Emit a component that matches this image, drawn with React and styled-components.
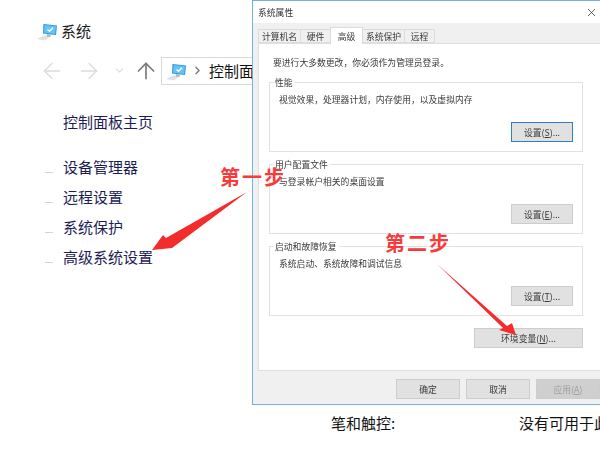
import styled, { createGlobalStyle } from 'styled-components'
import { ArrowLeft, ArrowRight, ArrowUp, ChevronDown, ChevronRight, X } from 'lucide-react'

const GlobalStyle = createGlobalStyle`
  html, body {
    margin: 0;
    padding: 0;
    width: 600px;
    height: 456px;
    overflow: hidden;
    background: #fff;
  }
  * { box-sizing: border-box; }
`

const Page = styled.div`
  position: relative;
  width: 600px;
  height: 456px;
  overflow: hidden;
  padding: 19px 0 0 38px;
  background: #fff;
  font-family: "Noto Sans CJK SC", "Liberation Sans", sans-serif;
  font-size: 15px;
  color: #1c1c1c;
`

const TitleRow = styled.div`
  display: flex;
  align-items: center;
  gap: 3px;
  height: 24px;
  line-height: 24px;
  margin-left: -2px;
`

const NavRow = styled.div`
  display: flex;
  align-items: center;
  height: 27px;
  margin-top: 14px;
  margin-left: 5px;
`

const NavButton = styled.div`
  display: flex;
  align-items: center;
  justify-content: center;
  flex: none;
  width: ${p => p.$w}px;
  margin-right: ${p => p.$gap || 0}px;
  color: ${p => p.$on ? '#7d7d7d' : '#dcdcdc'};
  svg { flex: none; }
`

const AddressBar = styled.div`
  display: flex;
  align-items: center;
  width: 200px;
  height: 28px;
  margin-left: 8px;
  padding-left: 3px;
  border: 1px solid #d9d9d9;
  white-space: nowrap;
  color: #111;
`

const Crumb = styled.span`
  display: flex;
  margin: 0 5px 0 4px;
  color: #777;
`

const Sidebar = styled.div`
  margin: 23px 0 0 25px;
  color: #1d1d55;
`

const HomeLink = styled.div`
  height: 30px;
  line-height: 30px;
  margin-bottom: 15px;
`

const SideLink = styled.div`
  position: relative;
  height: 30px;
  line-height: 30px;
  &::before {
    content: "";
    position: absolute;
    left: -18px;
    top: 20px;
    width: 8px;
    height: 1px;
    background: #d4d4d4;
  }
`

const SpecRow = styled.div`
  display: grid;
  grid-template-columns: 188px 200px;
  margin: 139px 0 0 293px;
  height: 24px;
  line-height: 24px;
  white-space: nowrap;
  color: #111;
`

/* the dialog floats over the page like a real window */
const Dialog = styled.div`
  position: absolute;
  left: 252px;
  top: 0;
  width: 360px;
  height: 405px;
  display: flex;
  flex-direction: column;
  background: #f0f0f0;
  border: 1px solid #70b1e6;
  font-size: 8.8px;
  color: #3a3a3a;
  filter: blur(0.3px);
`

const TitleBar = styled.div`
  display: flex;
  align-items: center;
  justify-content: space-between;
  flex: none;
  height: 22px;
  padding: 0 13px 0 5px;
  background: #fff;
  color: #333;
`

const TabRow = styled.div`
  display: flex;
  align-items: flex-end;
  flex: none;
  height: 20px;
  padding-left: 5px;
`

const Tab = styled.div`
  display: flex;
  align-items: center;
  justify-content: center;
  width: ${p => p.$w}px;
  height: ${p => p.$active ? 17 : 14}px;
  margin-bottom: ${p => p.$active ? -1 : 0}px;
  background: ${p => p.$active ? '#fff' : '#f0f0f0'};
  border: 1px solid #dcdcdc;
  border-bottom: ${p => p.$active ? 'none' : '1px solid #dcdcdc'};
  margin-right: -1px;
  position: relative;
  z-index: ${p => p.$active ? 1 : 0};
  white-space: nowrap;
`

const Panel = styled.div`
  flex: none;
  height: 328px;
  margin-left: 5px;
  padding: 13px 0 0 10px;
  background: #fff;
  border: 1px solid #dfdfdf;
`

const Notice = styled.div`
  height: 12px;
  line-height: 12px;
  margin-left: 4px;
  white-space: nowrap;
`

const Group = styled.div`
  position: relative;
  width: 314px;
  height: ${p => p.$h}px;
  margin-top: ${p => p.$top}px;
  padding: 11px 9px 9px 9px;
  border: 1px solid #e2e2e2;
  display: flex;
  flex-direction: column;
  justify-content: space-between;
`

const GroupLabel = styled.span`
  position: absolute;
  left: 4px;
  top: -6px;
  padding: 0 2px 0 1px;
  line-height: 12px;
  background: #fff;
`

const GroupText = styled.div`
  height: 12px;
  line-height: 12px;
  white-space: nowrap;
`

const SetButton = styled.div`
  display: flex;
  align-items: center;
  justify-content: center;
  align-self: flex-end;
  width: ${p => p.$w || 62}px;
  height: 20px;
  background: #e1e1e1;
  border: ${p => p.$focus ? '1px solid #2f7fc4' : '1px solid #cdcdcd'};
  color: ${p => p.$off ? '#a0a0a0' : '#3a3a3a'};
  ${p => p.$off ? 'background: #cfcfcf;' : ''}
  white-space: nowrap;
`

const EnvRow = styled.div`
  display: flex;
  justify-content: flex-end;
  width: 314px;
  margin-top: 12px;
`

const Footer = styled.div`
  display: flex;
  gap: 6px;
  margin: 8px 0 0 143px;
`

const Mnemonic = styled.span`
  text-decoration: underline;
`

const Annotations = styled.svg`
  position: absolute;
  left: 0;
  top: 0;
  pointer-events: none;
`

const Note = styled.div`
  position: absolute;
  left: ${p => p.$x}px;
  top: ${p => p.$y}px;
  font-size: 20px;
  line-height: 24px;
  font-weight: 700;
  letter-spacing: 2px;
  color: #f93a3a;
  white-space: nowrap;
`

function PcIcon() {
  return (
    <svg width="22" height="20" viewBox="0 0 22 20" style={{ flex: 'none' }}>
      <path d="M1 18 L8 14.5 L14 15.5 L9 19.5 Z" fill="#dfe2e5" />
      <path d="M7.5 3 L21 4.5 L20 14 L7 12.5 Z" fill="#2f93dd" />
      <path d="M8.5 4 L20 5.3 L19.2 13 L8 11.7 Z" fill="#62c4f6" />
      <path d="M11.5 8.5 L13.5 10.3 L17 6.8" fill="none" stroke="#fff" strokeWidth="1.3" />
      <path d="M11 13 L15 13.5 L14.5 16 L10.5 15.5 Z" fill="#aeb8c0" />
    </svg>
  )
}

export default function App() {
  return (
    <Page>
      <GlobalStyle />
      <TitleRow><PcIcon />系统</TitleRow>
      <NavRow>
        <NavButton $w={17} $gap={21}><ArrowLeft size={26} strokeWidth={1.3} /></NavButton>
        <NavButton $w={16} $gap={18}><ArrowRight size={26} strokeWidth={1.3} /></NavButton>
        <NavButton $w={9} $gap={14}><ChevronDown size={13} strokeWidth={2} /></NavButton>
        <NavButton $w={15} $on><ArrowUp size={26} strokeWidth={1.6} /></NavButton>
        <AddressBar>
          <PcIcon />
          <Crumb><ChevronRight size={13} strokeWidth={2.4} /></Crumb>
          控制面板
        </AddressBar>
      </NavRow>
      <Sidebar>
        <HomeLink>控制面板主页</HomeLink>
        <SideLink>设备管理器</SideLink>
        <SideLink>远程设置</SideLink>
        <SideLink>系统保护</SideLink>
        <SideLink>高级系统设置</SideLink>
      </Sidebar>
      <SpecRow>
        <span>笔和触控:</span>
        <span>没有可用于此显示器的笔或触控输入</span>
      </SpecRow>

      <Dialog>
        <TitleBar>
          系统属性
          <X size={13} strokeWidth={1.4} color="#333" />
        </TitleBar>
        <TabRow>
          <Tab $w={43}>计算机名</Tab>
          <Tab $w={31}>硬件</Tab>
          <Tab $w={33} $active>高级</Tab>
          <Tab $w={43}>系统保护</Tab>
          <Tab $w={31}>远程</Tab>
        </TabRow>
        <Panel>
          <Notice>要进行大多数更改，你必须作为管理员登录。</Notice>
          <Group $h={70} $top={13}>
            <GroupLabel>性能</GroupLabel>
            <GroupText>视觉效果，处理器计划，内存使用，以及虚拟内存</GroupText>
            <SetButton $focus>设置(<Mnemonic>S</Mnemonic>)...</SetButton>
          </Group>
          <Group $h={70} $top={12}>
            <GroupLabel>用户配置文件</GroupLabel>
            <GroupText>与登录帐户相关的桌面设置</GroupText>
            <SetButton>设置(<Mnemonic>E</Mnemonic>)...</SetButton>
          </Group>
          <Group $h={70} $top={12}>
            <GroupLabel>启动和故障恢复</GroupLabel>
            <GroupText>系统启动、系统故障和调试信息</GroupText>
            <SetButton>设置(<Mnemonic>T</Mnemonic>)...</SetButton>
          </Group>
          <EnvRow>
            <SetButton $w={109}>环境变量(<Mnemonic>N</Mnemonic>)...</SetButton>
          </EnvRow>
        </Panel>
        <Footer>
          <SetButton $w={64}>确定</SetButton>
          <SetButton $w={64}>取消</SetButton>
          <SetButton $w={64} $off>应用(<Mnemonic>A</Mnemonic>)</SetButton>
        </Footer>
      </Dialog>

      <Annotations width="600" height="456" viewBox="0 0 600 456">
        <path d="M247 192 L172 248 L152 250 L163 235 L166 238 Z" fill="#f42c2c" />
        <path d="M437 264 L507 326 L512 323 L516 335 L499 330 L503 328 Z" fill="#f42c2c" />
      </Annotations>
      <Note $x={220} $y={165}>第一步</Note>
      <Note $x={385} $y={231}>第二步</Note>
    </Page>
  )
}
